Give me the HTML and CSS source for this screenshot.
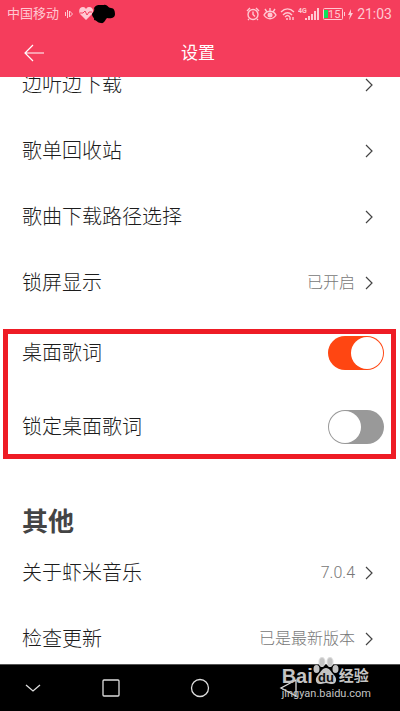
FILE: index.html
```html
<!DOCTYPE html>
<html lang="zh-CN">
<head>
<meta charset="utf-8">
<meta name="viewport" content="width=device-width, initial-scale=1">
<title>设置</title>
<link rel="stylesheet" href="styles.css">
</head>
<body>
<div class="app">
  <header class="top">
    <div class="status">
      <div class="status-left">
        <span>中国移动</span>
        <svg width="12" height="12" viewBox="0 0 12 12"><path d="M2.500 4v4M4.500 2v8M6.500 3l3 3-3 3z"/></svg>
        <svg width="38" height="20" viewBox="0 0 38 20"><path class="fill" d="M7 16 1 10C-1 6 1 3 4 3c2 0 3 2 3 2s1-2 3-2c4 0 5 4 3 7z"/><path class="pulse" d="M1 9h3l2-2 2 4 2-3h3"/><path class="blot" d="M15 4C17 0 21 1 25 1c3-1 4 3 7 3 3 0 4 3 4 6 0 4-4 5-8 4-2 2-3 6-6 5-4 0-4-3-7-3 1-2-2-3-2-6 1-2 3-3 2-6z"/></svg>
      </div>
      <div class="status-right">
        <svg width="14" height="14" viewBox="0 0 14 14"><circle cx="7" cy="7.500" r="5"/><path d="M7 4.500v3l2 2M1 4l3-3M13 4l-3-3M3 12l-1 1M11 12l1 1"/></svg>
        <svg width="14" height="14" viewBox="0 0 14 14"><path d="M1 8c3-5 9-5 12 0-3 5-9 5-12 0zM2 2l2 3M7 1v3M12 2l-2 3"/><circle class="fill" cx="7" cy="8" r="2.500"/></svg>
        <svg width="15" height="14" viewBox="0 0 15 14"><path d="M1 5c4-4 9-4 13 0M3 8c3-3 6-3 9 0M5 10c2-2 3-2 5 0M10 10v3M13 10v3"/><circle class="fill" cx="7" cy="12" r="1"/></svg>
        <svg class="signal" width="22" height="14" viewBox="0 0 22 14"><text x="0" y="6">4G</text><path d="M8 13v-2M11 13V9M14 13V7M17 13V4M20 13V1"/></svg>
        <svg class="battery" width="31" height="12" viewBox="0 0 31 12"><rect x=".5" y=".5" width="19" height="11" rx="1"/><path class="level" d="M1 2h4v8H1z"/><text x="5" y="10">15</text><path d="M21.500 4v4"/><path class="fill" d="m28 1-3 6h2l-1 5 4-7h-2z"/></svg>
        <time>21:03</time>
      </div>
    </div>
    <div class="titlebar">
      <button class="back" type="button" aria-label="返回"><svg width="20" height="18" viewBox="0 0 20 18"><path d="M9 1 1 9l8 8M1 9h19"/></svg></button>
      <h1>设置</h1>
    </div>
  </header>
  <main>
    <div class="list">
      <a class="row" href="#"><span>边听边下载</span><svg class="chev" width="8" height="14" viewBox="0 0 8 14"><path d="m1 1 6 6-6 6"/></svg></a>
      <a class="row" href="#"><span>歌单回收站</span><svg class="chev" width="8" height="14" viewBox="0 0 8 14"><path d="m1 1 6 6-6 6"/></svg></a>
      <a class="row" href="#"><span>歌曲下载路径选择</span><svg class="chev" width="8" height="14" viewBox="0 0 8 14"><path d="m1 1 6 6-6 6"/></svg></a>
      <a class="row" href="#"><span>锁屏显示</span><span class="value">已开启</span><svg class="chev" width="8" height="14" viewBox="0 0 8 14"><path d="m1 1 6 6-6 6"/></svg></a>
      <div class="marked">
        <label class="row toggle"><span>桌面歌词</span><input type="checkbox" role="switch" checked></label>
        <label class="row toggle"><span>锁定桌面歌词</span><input type="checkbox" role="switch"></label>
      </div>
      <h2>其他</h2>
      <a class="row" href="#"><span>关于虾米音乐</span><span class="value">7.0.4</span><svg class="chev" width="8" height="14" viewBox="0 0 8 14"><path d="m1 1 6 6-6 6"/></svg></a>
      <a class="row" href="#"><span>检查更新</span><span class="value">已是最新版本</span><svg class="chev" width="8" height="14" viewBox="0 0 8 14"><path d="m1 1 6 6-6 6"/></svg></a>
    </div>
  </main>
  <nav>
    <button type="button" aria-label="隐藏"><svg width="20" height="20" viewBox="0 0 20 20"><path d="m3 7 7 6 7-6"/></svg></button>
    <button type="button" aria-label="多任务"><svg width="20" height="20" viewBox="0 0 20 20"><rect x="2" y="2" width="16" height="16" rx="1"/></svg></button>
    <button type="button" aria-label="主页"><svg width="20" height="20" viewBox="0 0 20 20"><circle cx="10" cy="10" r="8.500"/></svg></button>
    <button type="button" aria-label="返回"><svg width="20" height="20" viewBox="0 0 20 20"><path d="M17 2v16L2 10z"/></svg></button>
  </nav>
  <div class="watermark">
    <div class="brand">
      <span>Bai</span>
      <svg width="26" height="30" viewBox="0 0 26 30"><g class="paw"><g class="toes"><ellipse cx="9" cy="5" rx="3" ry="4.500"/><ellipse cx="17" cy="5" rx="3" ry="4.500"/></g><ellipse cx="3.500" cy="12" rx="3" ry="4"/><ellipse cx="22.500" cy="12" rx="3" ry="4"/><path d="M13 11c4 0 5 4 8 7 4 4 2 10-3 9-2 0-3-1-5-1s-3 1-5 1c-5 1-7-5-3-9 3-3 4-7 8-7z"/></g><text x="13" y="25" text-anchor="middle">du</text></svg>
      <span class="cn">经验</span>
    </div>
    <div class="site">jingyan.baidu.com</div>
  </div>
</div>
</body>
</html>
```
FILE: styles.css
```css
* { box-sizing: border-box; }
body {
  margin: 0;
  font-family: Roboto, "Noto Sans CJK SC", sans-serif;
  color: #444;
  background: #fff;
}
button { padding: 0; border: 0; background: none; display: flex; }
svg { display: block; flex: none; fill: none; stroke: currentColor; }
.app {
  position: relative;
  display: flex;
  flex-direction: column;
  height: 100vh;
  overflow: hidden;
}

.top { flex: none; background: #f53d5c; color: #fff; }
.status {
  display: flex;
  justify-content: space-between;
  align-items: center;
  height: 28px;
  padding: 0 8px 0 7px;
  color: #ffc8d2;
  font-size: 13px;
  line-height: 20px;
}
.status-left { display: flex; align-items: center; gap: 4px; }
.status-right { display: flex; align-items: center; gap: 3px; }
.status time { font-size: 14px; }
.status-right svg { stroke-width: 1.4; }
.fill { fill: currentColor; stroke: none; }
.pulse { stroke: #f53d5c; }
.blot { fill: #000; stroke: none; }
.signal path { stroke-width: 2; }
.status text { fill: currentColor; stroke: none; font-size: 7px; font-weight: 700; }
.status .battery { stroke-width: 1; }
.status .battery text { font-size: 11px; font-weight: 400; }
.level { fill: #0ce05a; stroke: none; }
.titlebar {
  display: grid;
  grid-template-columns: 1fr auto 1fr;
  align-items: center;
  height: 49px;
  padding: 0 28px 0 24px;
}
.back { color: inherit; justify-self: start; }
.back svg { stroke-width: 1.2; }
h1 { margin: 0; font-size: 17px; line-height: 24px; font-weight: 400; }

main { flex: 1; min-height: 0; overflow: hidden; }
/* the list is scrolled part of a row under the title bar */
.list { margin-top: -25px; }
.row {
  display: flex;
  align-items: center;
  height: 66px;
  padding: 0 27px 0 22px;
  gap: 10px;
  color: #1c1c1c;
  font-size: 20px;
  line-height: 30px;
  font-weight: 300;
  text-decoration: none;
}
.row > :first-child { flex: 1; }
.value { color: #777; font-size: 16px; }
.chev { color: #444; stroke-width: 1.2; }
.marked { position: relative; }
.marked::after {
  content: "";
  position: absolute;
  inset: 13px 4px 5px 3px;
  border: 5px solid #ee1c25;
  pointer-events: none;
}
.toggle { height: 74px; padding-right: 16px; }
.toggle input {
  appearance: none;
  display: flex;
  width: 56px;
  height: 34px;
  margin: 0;
  padding: 1px;
  border-radius: 17px;
  background: #999;
}
.toggle input::before {
  content: "";
  width: 32px;
  height: 32px;
  border-radius: 50%;
  background: #fff;
}
.toggle input:checked { justify-content: flex-end; background: #ff4612; }
h2 { margin: 0; padding: 40px 22px 0; font-size: 26px; line-height: 36px; font-weight: 700; }

nav {
  flex: none;
  display: grid;
  grid-template-columns: 66fr 90fr 88fr 90fr 66fr;
  place-items: center;
  height: 47px;
  border-top: 1px solid #555;
  background: #000;
}
nav button { color: #ddd; }
nav svg { stroke-width: 1.3; }

.watermark {
  position: absolute;
  right: 29px;
  bottom: 10px;
  color: #c4c4c4;
}
.brand {
  display: flex;
  align-items: flex-end;
  height: 31px;
  font-family: "Liberation Sans", "Noto Sans CJK SC", sans-serif;
  font-size: 20px;
  line-height: 22px;
  font-weight: 700;
}
.brand .cn { font-size: 15px; }
.paw { fill: #c4c4c4; stroke: none; }
.toes { stroke: #ddd; }
.brand text { fill: #111; stroke: none; font-size: 13px; }
.site { font-size: 11px; line-height: 14px; }
```
